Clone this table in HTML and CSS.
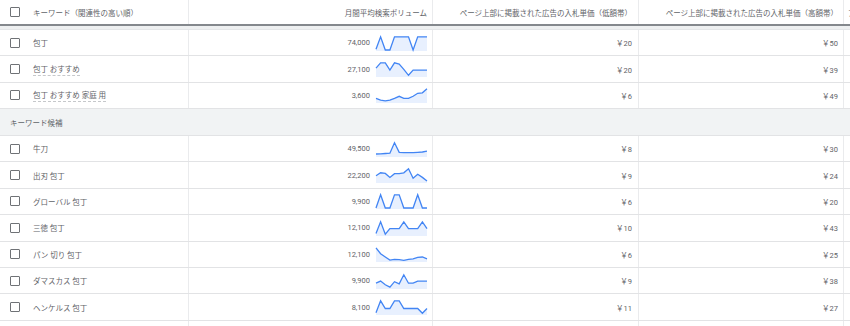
FILE: index.html
```html
<!DOCTYPE html>
<html lang="ja">
<head>
<meta charset="utf-8">
<title>キーワード候補</title>
<link rel="stylesheet" href="styles.css">
</head>
<body>
<div class="viewport">
  <div class="table">
    <div class="row head">
      <div class="cell kw"><span class="cb"></span><span>キーワード（関連性の高い順）</span></div>
      <div class="cell vol">月間平均検索ボリューム</div>
      <div class="cell num c3">ページ上部に掲載された広告の入札単価（低額帯）</div>
      <div class="cell num c4">ページ上部に掲載された広告の入札単価（高額帯）</div>
      <div class="cell extra">アカウントのステータス</div>
    </div>
    <div class="band"></div>

    <div class="row">
      <div class="cell kw"><span class="cb"></span><span>包丁</span></div>
      <div class="cell vol"><span>74,000</span><svg class="spark" viewBox="0 0 51 15"><path class="area" d="M0,15 L0,13.3 4.6,0.8 9.3,14 13.9,14 18.5,0.8 23.2,0.8 27.8,0.8 32.5,0.8 37.1,14 41.7,0.8 46.4,0.8 51,0.8 L51,15 Z"/><polyline class="line" points="0,13.3 4.6,0.8 9.3,14 13.9,14 18.5,0.8 23.2,0.8 27.8,0.8 32.5,0.8 37.1,14 41.7,0.8 46.4,0.8 51,0.8"/></svg></div>
      <div class="cell num c3">￥20</div>
      <div class="cell num c4">￥50</div>
      <div class="cell extra"></div>
    </div>
    <div class="row">
      <div class="cell kw"><span class="cb"></span><span class="dash">包丁 おすすめ</span></div>
      <div class="cell vol"><span>27,100</span><svg class="spark" viewBox="0 0 51 15"><path class="area" d="M0,15 L0,6.1 4.6,0.8 9.3,0.8 13.9,8.1 18.5,0.8 23.2,2.1 27.8,7.4 32.5,13.3 37.1,8.1 41.7,8.1 46.4,8.1 51,8.1 L51,15 Z"/><polyline class="line" points="0,6.1 4.6,0.8 9.3,0.8 13.9,8.1 18.5,0.8 23.2,2.1 27.8,7.4 32.5,13.3 37.1,8.1 41.7,8.1 46.4,8.1 51,8.1"/></svg></div>
      <div class="cell num c3">￥20</div>
      <div class="cell num c4">￥39</div>
      <div class="cell extra"></div>
    </div>
    <div class="row">
      <div class="cell kw"><span class="cb"></span><span class="dash">包丁 おすすめ 家庭 用</span></div>
      <div class="cell vol"><span>3,600</span><svg class="spark" viewBox="0 0 51 15"><path class="area" d="M0,15 L0,10.4 4.6,12.2 9.3,12.8 13.9,12.2 18.5,10.4 23.2,8.3 27.8,10.4 32.5,10.4 37.1,8.3 41.7,5.3 46.4,4.8 51,0.8 L51,15 Z"/><polyline class="line" points="0,10.4 4.6,12.2 9.3,12.8 13.9,12.2 18.5,10.4 23.2,8.3 27.8,10.4 32.5,10.4 37.1,8.3 41.7,5.3 46.4,4.8 51,0.8"/></svg></div>
      <div class="cell num c3">￥6</div>
      <div class="cell num c4">￥49</div>
      <div class="cell extra"></div>
    </div>

    <div class="section">キーワード候補</div>

    <div class="row">
      <div class="cell kw"><span class="cb"></span><span>牛刀</span></div>
      <div class="cell vol"><span>49,500</span><svg class="spark" viewBox="0 0 51 15"><path class="area" d="M0,15 L0,12 4.6,11.8 9.3,11.5 13.9,11.2 18.5,0.8 23.2,10.3 27.8,10.6 32.5,10.7 37.1,10.7 41.7,10.4 46.4,10 51,9.2 L51,15 Z"/><polyline class="line" points="0,12 4.6,11.8 9.3,11.5 13.9,11.2 18.5,0.8 23.2,10.3 27.8,10.6 32.5,10.7 37.1,10.7 41.7,10.4 46.4,10 51,9.2"/></svg></div>
      <div class="cell num c3">￥8</div>
      <div class="cell num c4">￥30</div>
      <div class="cell extra"></div>
    </div>
    <div class="row">
      <div class="cell kw"><span class="cb"></span><span>出刃 包丁</span></div>
      <div class="cell vol"><span>22,200</span><svg class="spark" viewBox="0 0 51 15"><path class="area" d="M0,15 L0,7.8 4.6,4.8 9.3,5.4 13.9,9.4 18.5,5.7 23.2,5.7 27.8,4.8 32.5,0.8 37.1,10.3 41.7,6.3 46.4,9.4 51,13.1 L51,15 Z"/><polyline class="line" points="0,7.8 4.6,4.8 9.3,5.4 13.9,9.4 18.5,5.7 23.2,5.7 27.8,4.8 32.5,0.8 37.1,10.3 41.7,6.3 46.4,9.4 51,13.1"/></svg></div>
      <div class="cell num c3">￥9</div>
      <div class="cell num c4">￥24</div>
      <div class="cell extra"></div>
    </div>
    <div class="row">
      <div class="cell kw"><span class="cb"></span><span>グローバル 包丁</span></div>
      <div class="cell vol"><span>9,900</span><svg class="spark" viewBox="0 0 51 15"><path class="area" d="M0,15 L0,14 4.6,0.8 9.3,14 13.9,14 18.5,0.8 23.2,0.8 27.8,14 32.5,14 37.1,14 41.7,0.8 46.4,14 51,14 L51,15 Z"/><polyline class="line" points="0,14 4.6,0.8 9.3,14 13.9,14 18.5,0.8 23.2,0.8 27.8,14 32.5,14 37.1,14 41.7,0.8 46.4,14 51,14"/></svg></div>
      <div class="cell num c3">￥6</div>
      <div class="cell num c4">￥20</div>
      <div class="cell extra"></div>
    </div>
    <div class="row">
      <div class="cell kw"><span class="cb"></span><span>三徳 包丁</span></div>
      <div class="cell vol"><span>12,100</span><svg class="spark" viewBox="0 0 51 15"><path class="area" d="M0,15 L0,12.4 4.6,0.8 9.3,13.2 13.9,7.7 18.5,7.7 23.2,7.7 27.8,0.8 32.5,7.7 37.1,7.7 41.7,7.7 46.4,0.8 51,7.7 L51,15 Z"/><polyline class="line" points="0,12.4 4.6,0.8 9.3,13.2 13.9,7.7 18.5,7.7 23.2,7.7 27.8,0.8 32.5,7.7 37.1,7.7 41.7,7.7 46.4,0.8 51,7.7"/></svg></div>
      <div class="cell num c3">￥10</div>
      <div class="cell num c4">￥43</div>
      <div class="cell extra"></div>
    </div>
    <div class="row">
      <div class="cell kw"><span class="cb"></span><span>パン 切り 包丁</span></div>
      <div class="cell vol"><span>12,100</span><svg class="spark" viewBox="0 0 51 15"><path class="area" d="M0,15 L0,0.8 4.6,6.7 9.3,10 13.9,13.1 18.5,12.4 23.2,12.7 27.8,13.3 32.5,12.4 37.1,11.8 41.7,10.3 46.4,10 51,11.8 L51,15 Z"/><polyline class="line" points="0,0.8 4.6,6.7 9.3,10 13.9,13.1 18.5,12.4 23.2,12.7 27.8,13.3 32.5,12.4 37.1,11.8 41.7,10.3 46.4,10 51,11.8"/></svg></div>
      <div class="cell num c3">￥6</div>
      <div class="cell num c4">￥25</div>
      <div class="cell extra"></div>
    </div>
    <div class="row">
      <div class="cell kw"><span class="cb"></span><span>ダマスカス 包丁</span></div>
      <div class="cell vol"><span>9,900</span><svg class="spark" viewBox="0 0 51 15"><path class="area" d="M0,15 L0,9.2 4.6,7.1 9.3,10.8 13.9,13.1 18.5,7.7 23.2,9.9 27.8,0.8 32.5,9.2 37.1,9.2 41.7,7.1 46.4,7.1 51,7.1 L51,15 Z"/><polyline class="line" points="0,9.2 4.6,7.1 9.3,10.8 13.9,13.1 18.5,7.7 23.2,9.9 27.8,0.8 32.5,9.2 37.1,9.2 41.7,7.1 46.4,7.1 51,7.1"/></svg></div>
      <div class="cell num c3">￥9</div>
      <div class="cell num c4">￥38</div>
      <div class="cell extra"></div>
    </div>
    <div class="row">
      <div class="cell kw"><span class="cb"></span><span>ヘンケルス 包丁</span></div>
      <div class="cell vol"><span>8,100</span><svg class="spark" viewBox="0 0 51 15"><path class="area" d="M0,15 L0,12.7 4.6,0.8 9.3,8.5 13.9,8.5 18.5,0.8 23.2,0.8 27.8,8.5 32.5,8.5 37.1,8.5 41.7,8.5 46.4,13.3 51,8.5 L51,15 Z"/><polyline class="line" points="0,12.7 4.6,0.8 9.3,8.5 13.9,8.5 18.5,0.8 23.2,0.8 27.8,8.5 32.5,8.5 37.1,8.5 41.7,8.5 46.4,13.3 51,8.5"/></svg></div>
      <div class="cell num c3">￥11</div>
      <div class="cell num c4">￥27</div>
      <div class="cell extra"></div>
    </div>
    <div class="row tail">
      <div class="cell kw"></div>
      <div class="cell vol"></div>
      <div class="cell num c3"></div>
      <div class="cell num c4"></div>
      <div class="cell extra"></div>
    </div>
  </div>
</div>
</body>
</html>
```

FILE: styles.css
```css
html, body {
  margin: 0;
  padding: 0;
  background: #ffffff;
}

.viewport {
  width: 850px;
  height: 326px;
  overflow: hidden;
}

.table {
  width: 1100px;
  font-family: Roboto, "Noto Sans CJK JP", "Noto Sans", sans-serif;
  font-size: 7.5px;
  color: #5f6368;
}

.row {
  display: grid;
  grid-template-columns: 189px 244px 206px 205px 256px;
  height: 26.4px;
  box-sizing: border-box;
  border-bottom: 1px solid #e2e3e5;
  background: #ffffff;
}

.row.head {
  height: 26px;
  border-bottom: 2px solid #84888d;
}

.band {
  height: 4px;
  background: #eef0f1;
  border-bottom: 1px solid #e4e6e8;
  box-sizing: border-box;
}

.cell {
  display: flex;
  align-items: center;
  border-right: 1px solid #eaebed;
  white-space: nowrap;
  overflow: hidden;
  min-width: 0;
}

.cell.extra {
  border-right: none;
  padding-left: 4px;
}

.kw {
  padding-left: 10px;
}

.cb {
  flex: none;
  width: 10px;
  height: 10px;
  box-sizing: border-box;
  border: 1.5px solid #6f7276;
  border-radius: 1px;
  margin-right: 13px;
}

.dash {
  border-bottom: 1px dashed #c6c8cb;
  padding-bottom: 1px;
}

.vol {
  justify-content: flex-end;
  padding-right: 5px;
  gap: 6px;
}

.num {
  justify-content: flex-end;
}

.c3 {
  padding-right: 6px;
}

.c4 {
  padding-right: 5px;
}

.spark {
  flex: none;
  width: 51px;
  height: 15px;
  margin-top: 1px;
  overflow: visible;
}

.spark .area {
  fill: #e8f0fe;
  stroke: none;
}

.spark .line {
  fill: none;
  stroke: #4285f4;
  stroke-width: 1.3;
  stroke-linejoin: miter;
  stroke-linecap: butt;
}

.section {
  height: 26.8px;
  box-sizing: border-box;
  background: #f1f3f4;
  border-bottom: 1px solid #e2e3e5;
  padding-left: 10px;
  display: flex;
  align-items: center;
}
```
